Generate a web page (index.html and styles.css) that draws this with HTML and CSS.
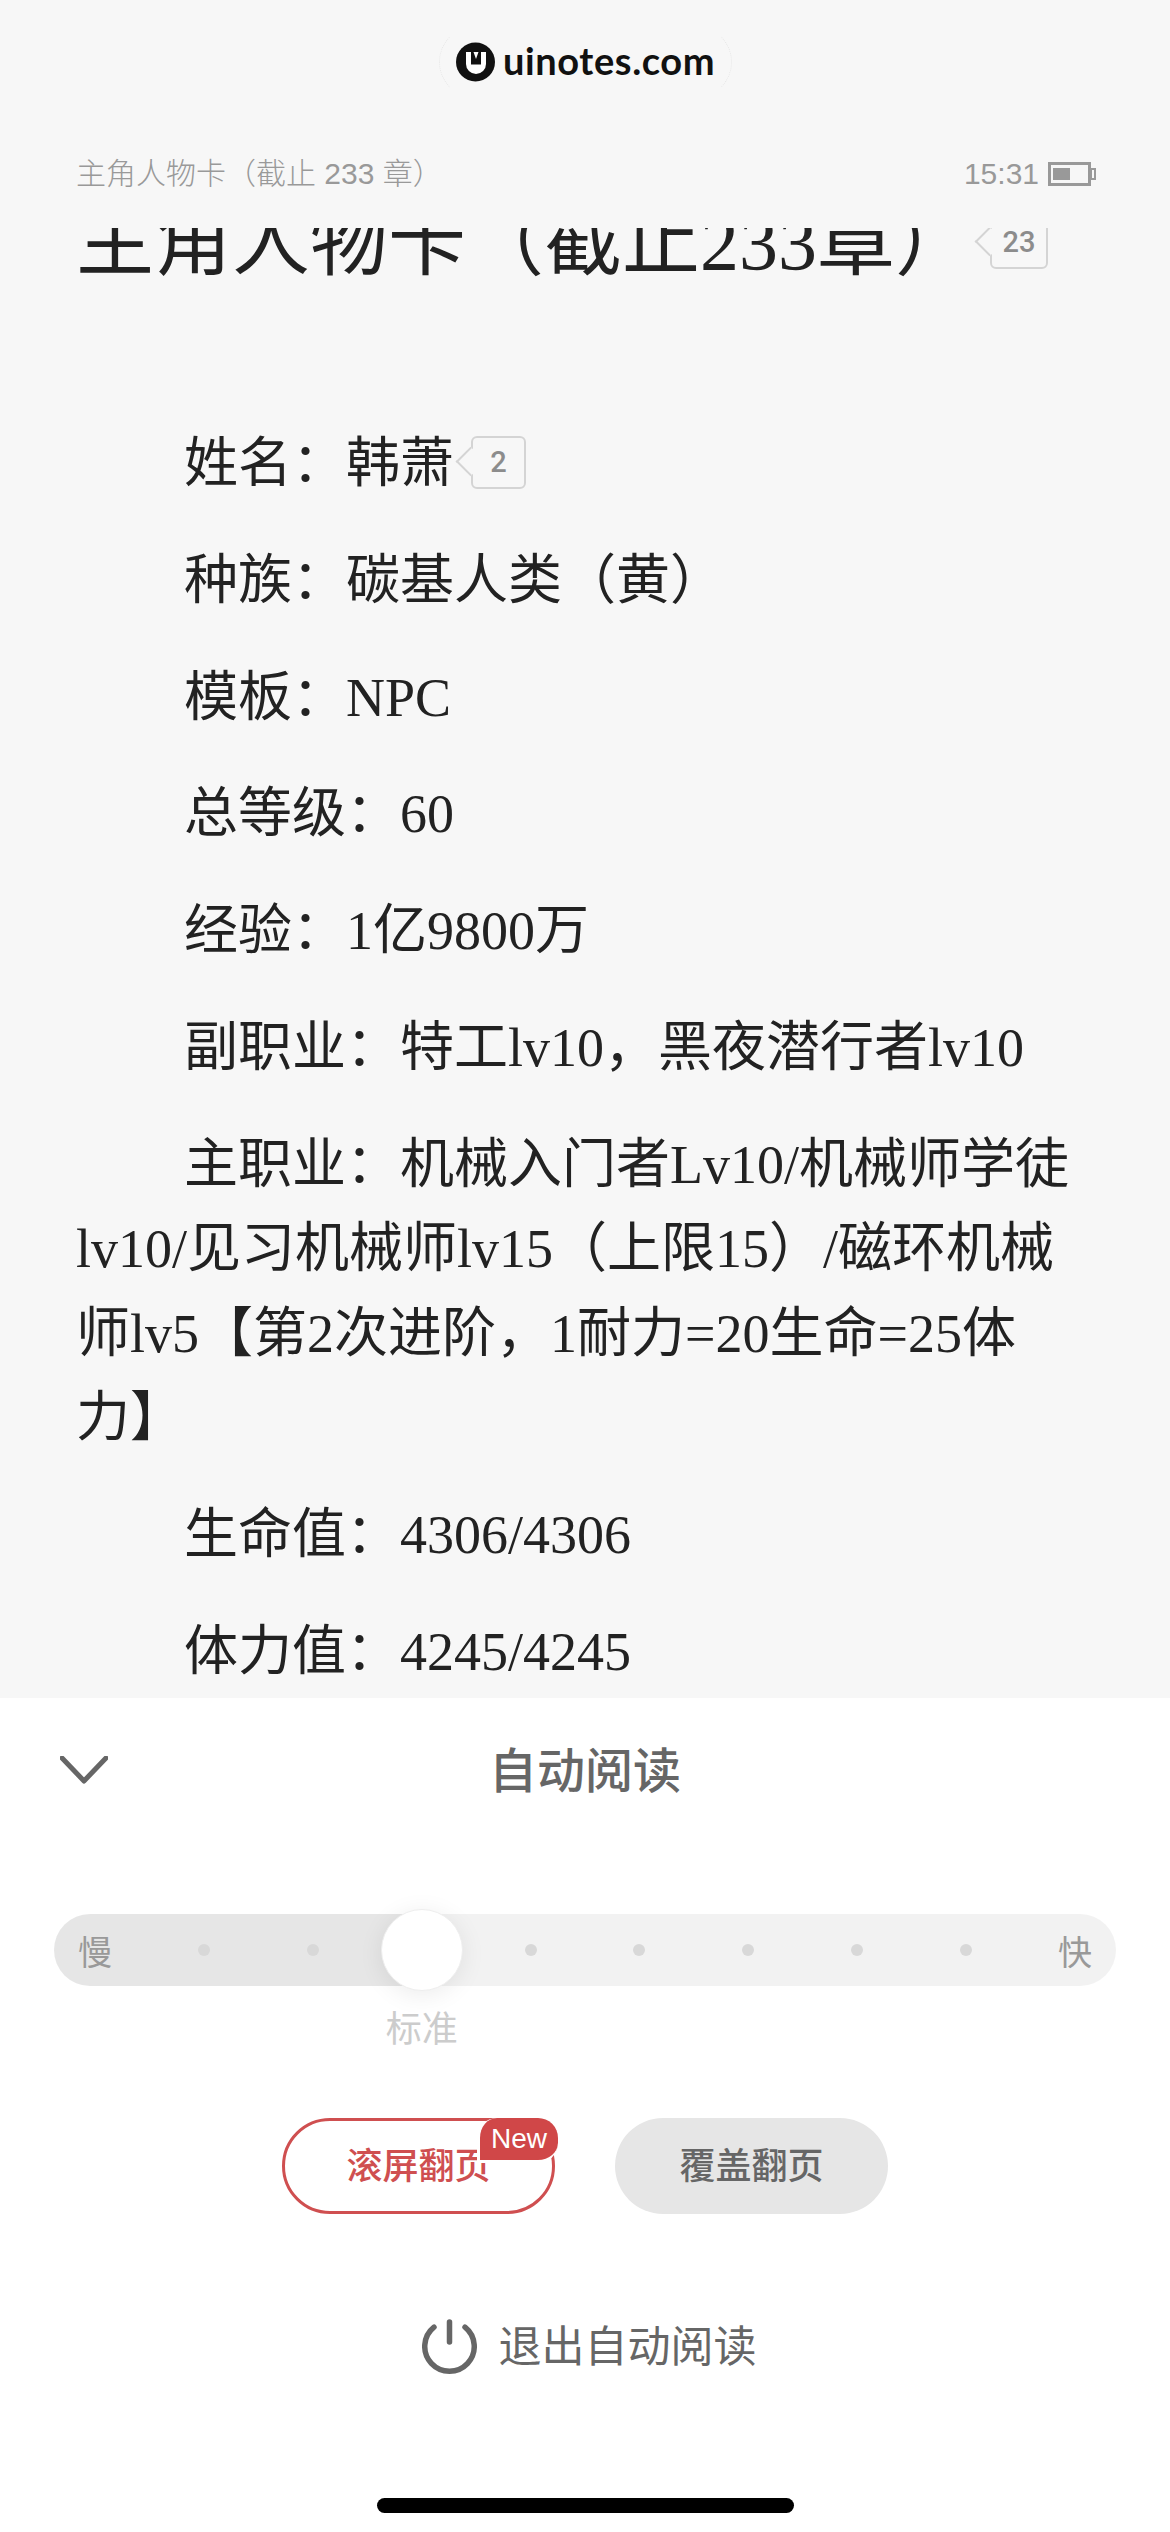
FILE: index.html
```html
<!DOCTYPE html>
<html lang="zh-CN">
<head>
    <meta charset="UTF-8">
    <meta name="viewport" content="width=device-width, initial-scale=1.0">
    <title>自动阅读</title>
    <link rel="stylesheet" href="styles.css">
</head>
<body>

    <!-- watermark over the page -->
    <div class="watermark">
        <svg class="logo" viewBox="0 0 39 40" width="39" height="40">
            <circle cx="19.5" cy="20" r="19.5" fill="#111"/>
            <path d="M10 10h20v12a10 10 0 0 1-20 0z" fill="#fff"/>
            <path d="M15 10v12.500h10V10h-2.500L20 17l-2.500-7z" fill="#111"/>
        </svg>
        <span class="watermark-text">uinotes.com</span>
    </div>

    <div class="reader">
        <div class="status">
            <span class="status-title">主角人物卡（截止 233 章）</span>
            <span class="status-right">
                <span>15:31</span>
                <svg class="battery" viewBox="0 0 48 24" width="48" height="24">
                    <rect x="1.500" y="1.500" width="40" height="21" fill="none" stroke="#999" stroke-width="3"/>
                    <rect x="5" y="6" width="17" height="12" fill="#999"/>
                    <rect x="43" y="7" width="4" height="10" fill="none" stroke="#999" stroke-width="2"/>
                </svg>
            </span>
        </div>

        <div class="content">
            <h1 class="chapter">主角人物卡（截止233章）<span class="note note-title">23</span></h1>
            <p class="line">姓名：韩萧<span class="note">2</span></p>
            <p class="line">种族：碳基人类（黄）</p>
            <p class="line">模板：NPC</p>
            <p class="line">总等级：60</p>
            <p class="line">经验：1亿9800万</p>
            <p class="line">副职业：特工lv10，黑夜潜行者lv10</p>
            <p class="line">主职业：机械入门者Lv10/机械师学徒lv10/见习机械师lv15（上限15）/磁环机械师lv5【第2次进阶，1耐力=20生命=25体力】</p>
            <p class="line">生命值：4306/4306</p>
            <p class="line">体力值：4245/4245</p>
        </div>
    </div>

    <div class="panel">
        <div class="panel-head">
            <svg class="chevron" viewBox="0 0 48 28" width="48" height="28">
                <path d="M2 2l22 23L46 2" fill="none" stroke="#666" stroke-width="5" stroke-linecap="round" stroke-linejoin="round"/>
            </svg>
            <span class="panel-title">自动阅读</span>
        </div>

        <div class="speed">
            <span class="stop">慢</span>
            <span class="stop"><i class="dot"></i></span>
            <span class="stop"><i class="dot"></i></span>
            <span class="stop">
                <i class="thumb"></i>
                <span class="thumb-label">标准</span>
            </span>
            <span class="stop"><i class="dot"></i></span>
            <span class="stop"><i class="dot"></i></span>
            <span class="stop"><i class="dot"></i></span>
            <span class="stop"><i class="dot"></i></span>
            <span class="stop"><i class="dot"></i></span>
            <span class="stop">快</span>
        </div>

        <div class="modes">
            <div class="mode mode-on">滚屏翻页<span class="badge">New</span></div>
            <div class="mode">覆盖翻页</div>
        </div>

        <div class="quit">
            <svg viewBox="0 0 55 55" width="55" height="55">
                <path d="M12 8.200A24.750 24.750 0 1 0 43 8.200" fill="none" stroke="#666" stroke-width="5.500" stroke-linecap="round"/>
                <path d="M27.500 3v20" fill="none" stroke="#666" stroke-width="5.500" stroke-linecap="round"/>
            </svg>
            <span class="quit-text">退出自动阅读</span>
        </div>

        <div class="home-bar"></div>
    </div>

</body>
</html>
```

FILE: styles.css
```css
html, body {
    margin: 0;
    padding: 0;
}
body {
    width: 1170px;
    height: 2532px;
    overflow: hidden;
    position: relative;
    background-color: #f7f7f7;
    font-family: "Liberation Serif", "Noto Sans CJK SC", serif;
}

/* watermark */
.watermark {
    position: absolute;
    top: 26px;
    left: 439px;
    width: 293px;
    height: 72px;
    box-sizing: border-box;
    padding-left: 16px;
    display: flex;
    align-items: center;
    gap: 8px;
    border-radius: 36px;
    border: 1px dotted #e6e6e6;
    border-top-color: transparent;
    border-bottom-color: transparent;
}
.logo {
    flex: none;
}
.watermark-text {
    font-family: Lato, "Noto Sans", sans-serif;
    font-size: 38px;
    font-weight: 700;
    letter-spacing: 0.6px;
    line-height: 44px;
    padding-bottom: 4px;
    color: #111;
}

/* reading page */
.reader {
    height: 1698px;
    display: flex;
    flex-direction: column;
    padding: 0 76px;
}
.status {
    height: 228px;
    flex: none;
    box-sizing: border-box;
    padding-top: 155px;
    display: flex;
    justify-content: space-between;
    font-family: "Liberation Sans", "Noto Sans CJK SC", sans-serif;
    font-size: 30px;
    line-height: 38px;
    font-weight: 300;
    color: #999;
}
.status-right {
    display: flex;
    align-items: center;
    gap: 9px;
    height: 38px;
    margin-right: -2px;
}
.content {
    flex: 1;
    overflow: hidden;
}
.chapter {
    margin: -35px 0 0;
    font-size: 78px;
    line-height: 100px;
    font-weight: 400;
    color: #222;
    white-space: nowrap;
}
.line {
    margin: 32.3px 0 0;
    text-indent: 108px;
    font-size: 54px;
    line-height: 84.5px;
    color: #222;
}
.chapter + .line {
    margin-top: 129px;
}
.note {
    display: inline-block;
    position: relative;
    box-sizing: border-box;
    width: 55px;
    height: 53px;
    margin-left: 17px;
    border: 2px solid #d4d4d4;
    border-radius: 6px;
    text-indent: 0;
    text-align: center;
    font-family: Roboto, sans-serif;
    font-size: 29px;
    font-weight: 500;
    line-height: 49px;
    color: #8c8c8c;
    vertical-align: 10px;
}
.note::before {
    content: "";
    position: absolute;
    left: -13px;
    top: 13px;
    width: 21px;
    height: 21px;
    box-sizing: border-box;
    border-left: 2px solid #d4d4d4;
    border-bottom: 2px solid #d4d4d4;
    background-color: #f7f7f7;
    transform: rotate(45deg);
}
.note-title {
    width: 58px;
    margin-left: 17px;
    vertical-align: 17px;
}

/* bottom panel */
.panel {
    height: 834px;
    background-color: #fff;
    display: flex;
    flex-direction: column;
}
.panel-head {
    height: 138px;
    padding-bottom: 6px;
    flex: none;
    display: flex;
    align-items: center;
    justify-content: center;
    position: relative;
}
.chevron {
    position: absolute;
    left: 60px;
    top: 58px;
}
.panel-title {
    font-family: "Noto Sans CJK SC", sans-serif;
    font-size: 48px;
    font-weight: 500;
    color: #666;
}
.speed {
    height: 72px;
    margin: 72px 54px 0;
    padding: 0 24px;
    display: flex;
    align-items: center;
    justify-content: space-between;
    border-radius: 36px;
    background: linear-gradient(to right, #e6e6e6 368px, #f2f2f2 368px);
    font-family: "Noto Sans CJK SC", sans-serif;
    font-size: 34px;
    color: #999;
}
.stop {
    width: 34px;
    display: flex;
    justify-content: center;
    align-items: center;
    position: relative;
}
.dot {
    width: 12px;
    height: 12px;
    border-radius: 50%;
    background-color: #d8d8d8;
}
.thumb {
    position: absolute;
    left: -24px;
    top: -41px;
    width: 82px;
    height: 82px;
    box-sizing: border-box;
    border-radius: 50%;
    border: 1px solid #eee;
    background-color: #fff;
    box-shadow: 0 4px 24px rgba(0, 0, 0, 0.08);
}
.thumb-label {
    position: absolute;
    top: 54px;
    left: -19px;
    width: 72px;
    font-size: 36px;
    line-height: 44px;
    color: #ccc;
}
.modes {
    margin-top: 132px;
    display: flex;
    justify-content: center;
    gap: 60px;
}
.mode {
    position: relative;
    box-sizing: border-box;
    width: 273px;
    height: 96px;
    border-radius: 48px;
    background-color: #e6e6e6;
    font-family: "Noto Sans CJK SC", sans-serif;
    font-size: 36px;
    font-weight: 500;
    line-height: 91px;
    text-align: center;
    color: #666;
}
.mode-on {
    background-color: #fff;
    border: 3px solid #cf4f50;
    line-height: 85px;
    color: #cf4f50;
}
.badge {
    position: absolute;
    top: -3px;
    right: -6px;
    width: 78px;
    height: 42px;
    box-sizing: content-box;
    border-radius: 20px 20px 20px 0;
    background-color: #d04748;
    border: 3px solid #fff;
    border-right: 0;
    border-top: 0;
    font-family: "Liberation Sans", sans-serif;
    font-size: 28px;
    font-weight: 400;
    line-height: 42px;
    color: #fff;
}
.quit {
    margin-top: 102px;
    padding-left: 8px;
    display: flex;
    align-items: center;
    justify-content: center;
    gap: 22px;
    font-family: "Noto Sans CJK SC", sans-serif;
    font-size: 43px;
    line-height: 54px;
    color: #666;
}
.quit-text {
    padding-bottom: 6px;
}
.home-bar {
    width: 417px;
    height: 15px;
    margin: 122px auto 0;
    border-radius: 8px;
    background-color: #000;
}
```
